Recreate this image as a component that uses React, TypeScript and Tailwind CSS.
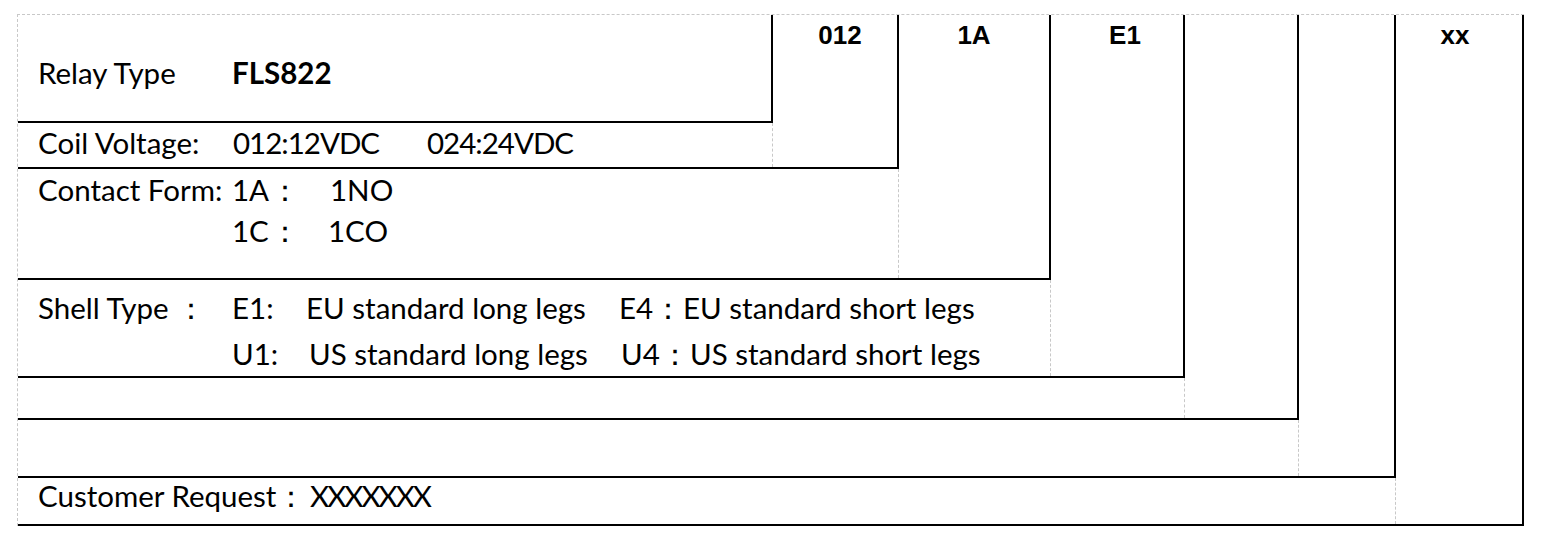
const body = "font-['Lato',sans-serif] text-[29.5px] text-black";
const head = "font-['Liberation_Sans',Arial,sans-serif] text-[26px] font-bold leading-[30px] text-black";

type Cell = { w?: string; text: string; cls?: string };

function Row({ cells }: { cells: Cell[] }) {
  return (
    <div className="flex whitespace-nowrap">
      {cells.map((c, i) => (
        <span key={i} className={`${c.w ?? ''} shrink-0 ${c.cls ?? ''}`}>
          {c.text}
        </span>
      ))}
    </div>
  );
}

export default function App() {
  return (
    <div className="min-h-[537px] bg-white pl-[17px] pt-[14px]">
      <div className="w-[1507px] border-t border-l border-dashed border-[#c8c8c8]">
        <div className="grid grid-cols-[755px_126px_152px_134px_114px_97px_128px] grid-rows-[108px_46px_111px_98px_42px_58px_48px]">
          {/* row 1 */}
          <div className={`col-start-1 row-start-1 border-r-2 border-b-2 border-black pl-[20px] pt-[37px] leading-[42px] ${body}`}>
            <Row cells={[{ w: 'w-[194px]', text: 'Relay Type' }, { text: 'FLS822', cls: 'font-bold' }]} />
          </div>

          {/* column codes */}
          <div className={`col-start-2 row-start-1 row-span-2 border-r-2 border-b-2 border-black pl-[10px] pt-[5px] text-center ${head}`}>012</div>
          <div className={`col-start-3 row-start-1 row-span-3 border-r-2 border-b-2 border-black pt-[5px] text-center ${head}`}>1A</div>
          <div className={`col-start-4 row-start-1 row-span-4 border-r-2 border-b-2 border-black pl-[16px] pt-[5px] text-center ${head}`}>E1</div>
          <div className="col-start-5 row-start-1 row-span-5 border-r-2 border-b-2 border-black" />
          <div className="col-start-6 row-start-1 row-span-6 border-r-2 border-b-2 border-black" />
          <div className={`col-start-7 row-start-1 row-span-7 border-r-2 border-b-2 border-black pr-[8px] pt-[5px] text-center ${head}`}>xx</div>

          {/* row 2 */}
          <div className="col-start-1 row-start-2 border-b-2 border-black">
            <div className={`h-full border-r border-dashed border-[#c8c8c8] pl-[20px] leading-[40px] ${body}`}>
              <Row
                cells={[
                  { w: 'w-[195px]', text: 'Coil Voltage:' },
                  { w: 'w-[194px]', text: '012:12VDC', cls: 'tracking-[-1px]' },
                  { text: '024:24VDC', cls: 'tracking-[-1px]' },
                ]}
              />
            </div>
          </div>

          {/* row 3 */}
          <div className="col-span-2 col-start-1 row-start-3 border-b-2 border-black">
            <div className={`h-full border-r border-dashed border-[#c8c8c8] pl-[20px] leading-[41px] ${body}`}>
              <Row cells={[{ w: 'w-[194px]', text: 'Contact Form:' }, { w: 'w-[38px]', text: '1A' }, { w: 'w-[60px]', text: '：' }, { text: '1NO' }]} />
              <Row cells={[{ w: 'w-[194px]', text: '' }, { w: 'w-[38px]', text: '1C' }, { w: 'w-[58px]', text: '：' }, { text: '1CO' }]} />
            </div>
          </div>

          {/* row 4 */}
          <div className="col-span-3 col-start-1 row-start-4 border-b-2 border-black">
            <div className={`h-full border-r border-dashed border-[#c8c8c8] pl-[20px] pt-[5px] leading-[46px] ${body}`}>
              <Row
                cells={[
                  { w: 'w-[194px]', text: 'Shell Type ：' },
                  { w: 'w-[74px]', text: 'E1:' },
                  { w: 'w-[313px]', text: 'EU standard long legs' },
                  { w: 'w-[64px]', text: 'E4：' },
                  { text: 'EU standard short legs' },
                ]}
              />
              <Row
                cells={[
                  { w: 'w-[194px]', text: '' },
                  { w: 'w-[77px]', text: 'U1:' },
                  { w: 'w-[312px]', text: 'US standard long legs' },
                  { w: 'w-[69px]', text: 'U4：' },
                  { text: 'US standard short legs' },
                ]}
              />
            </div>
          </div>

          {/* rows 5-6, empty */}
          <div className="col-span-4 col-start-1 row-start-5 border-b-2 border-black">
            <div className="h-full border-r border-dashed border-[#c8c8c8]" />
          </div>
          <div className="col-span-5 col-start-1 row-start-6 border-b-2 border-black">
            <div className="h-full border-r border-dashed border-[#c8c8c8]" />
          </div>

          {/* row 7 */}
          <div className="col-span-6 col-start-1 row-start-7 border-b-2 border-black">
            <div className={`h-full border-r border-dashed border-[#c8c8c8] pl-[20px] leading-[36px] ${body}`}>
              <Row cells={[{ w: 'w-[272px]', text: 'Customer Request：' }, { text: 'XXXXXXX', cls: 'tracking-[-2px]' }]} />
            </div>
          </div>
        </div>
      </div>
    </div>
  );
}
